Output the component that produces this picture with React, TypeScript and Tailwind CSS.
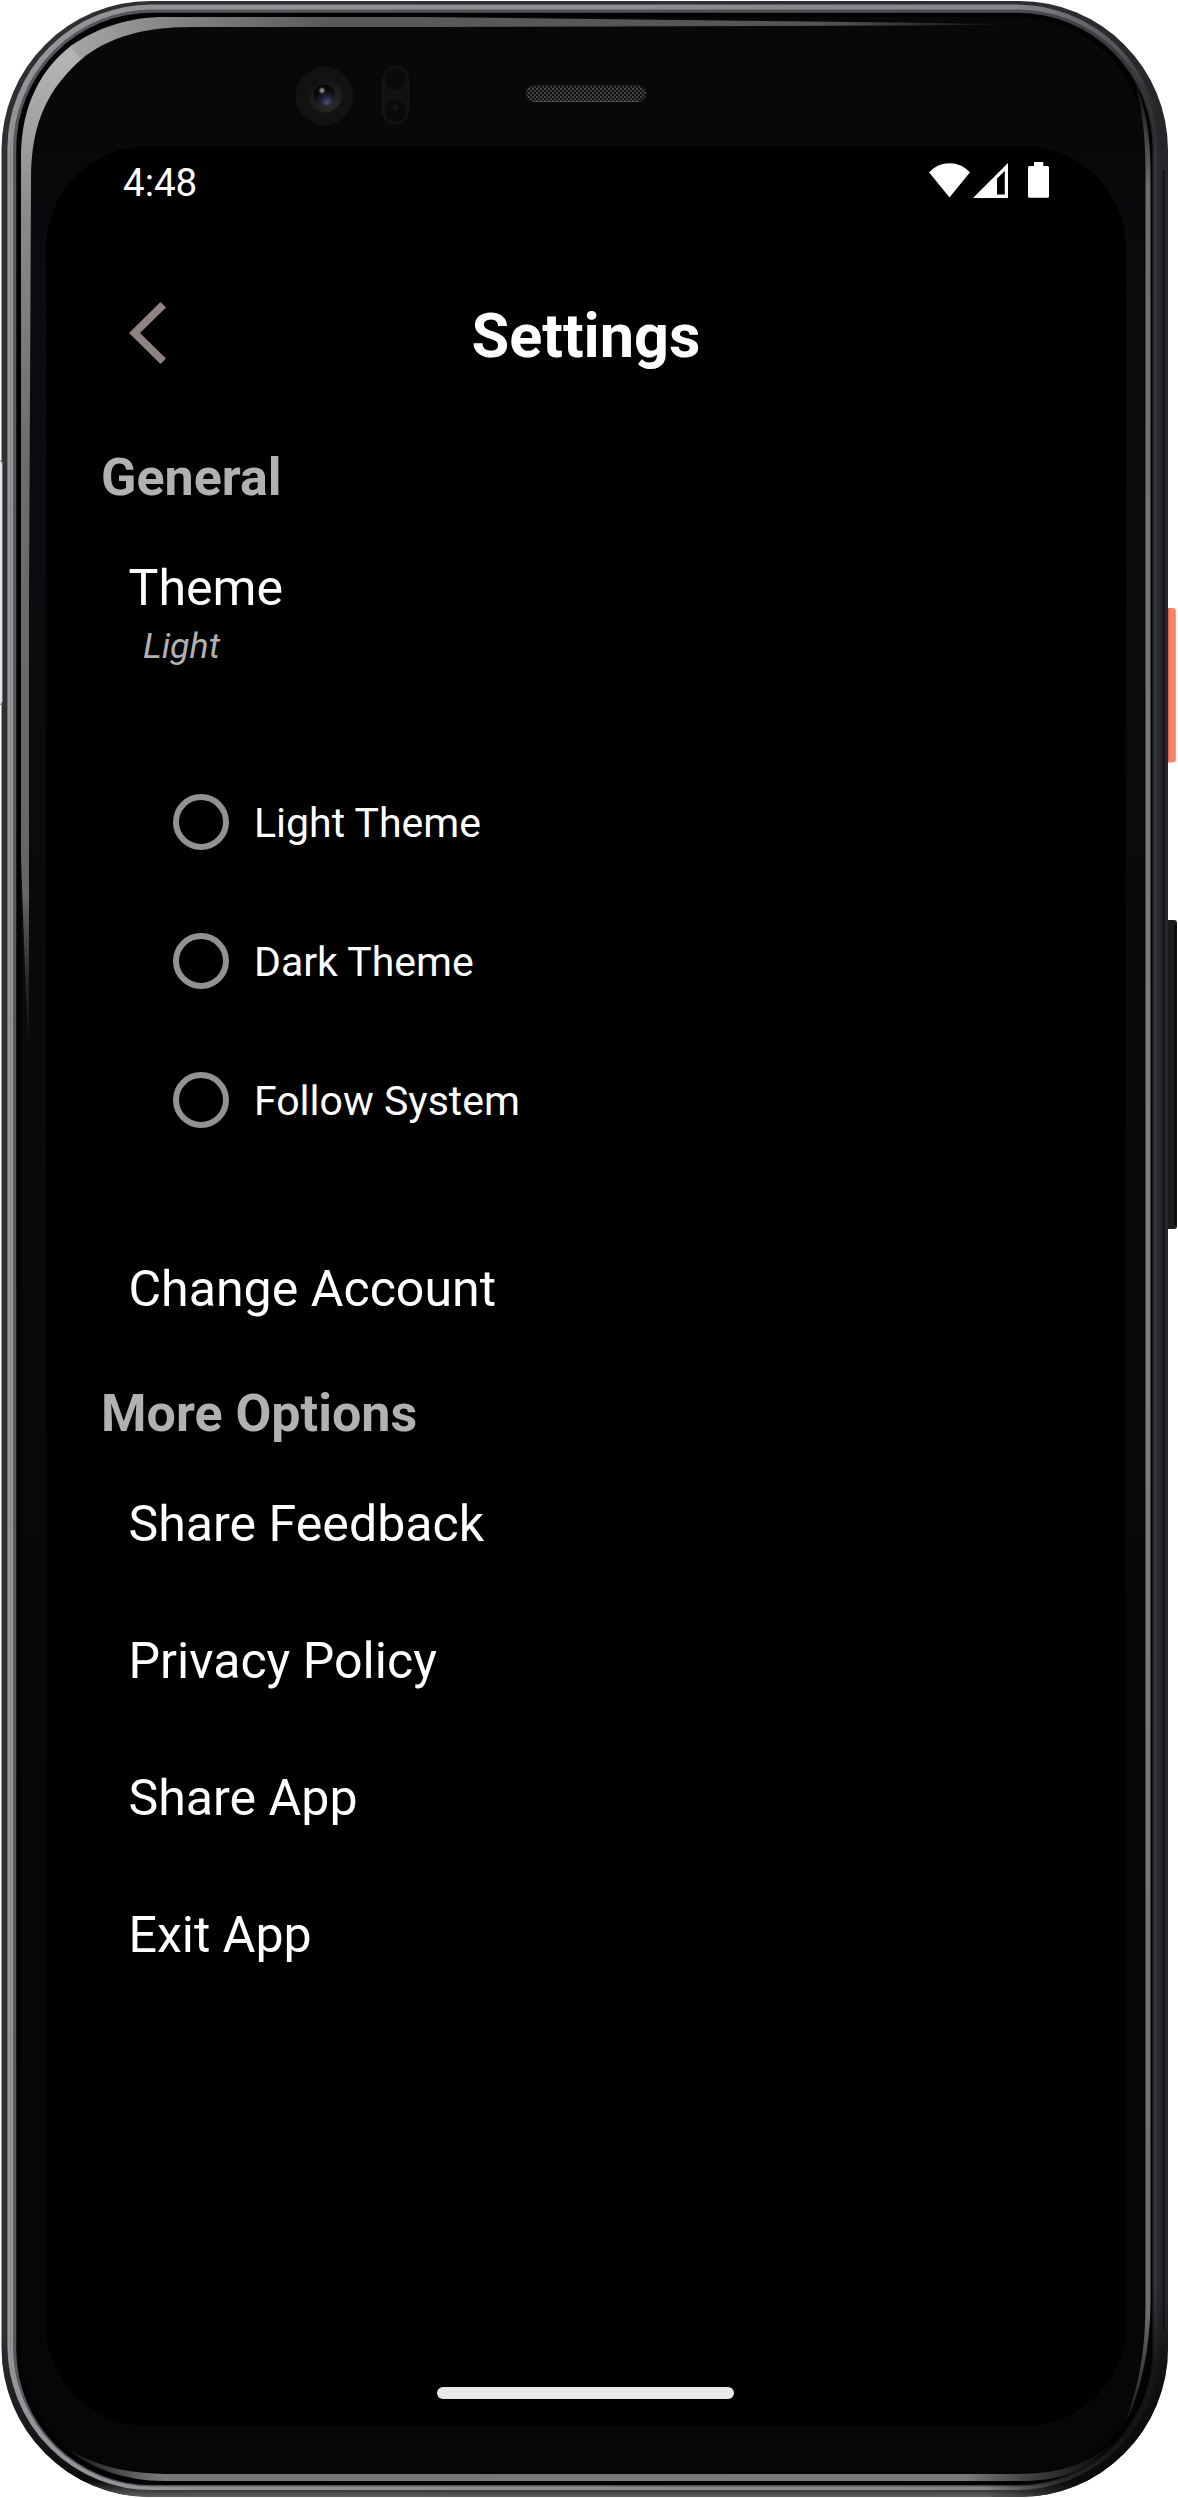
import React from "react";

function PhoneFrame() {
  return (
    <svg
      className="absolute inset-0 h-full w-full"
      viewBox="0 0 1178 2498"
      fill="none"
      aria-hidden="true"
    >
      <defs>
        <linearGradient id="shell" x1="0" y1="0" x2="1178" y2="0" gradientUnits="userSpaceOnUse">
          <stop offset="0" stopColor="#2f3131" />
          <stop offset="0.9" stopColor="#2c2d2f" />
          <stop offset="1" stopColor="#232527" />
        </linearGradient>
        <linearGradient id="bottomShade" x1="0" y1="2330" x2="0" y2="2498" gradientUnits="userSpaceOnUse">
          <stop offset="0" stopColor="#0a0a0b" stopOpacity="0" />
          <stop offset="0.9" stopColor="#0a0a0b" />
          <stop offset="1" stopColor="#666668" />
        </linearGradient>
        <linearGradient id="silver" x1="0" y1="0" x2="1178" y2="0" gradientUnits="userSpaceOnUse">
          <stop offset="0" stopColor="#94969b" />
          <stop offset="0.86" stopColor="#85868b" />
          <stop offset="0.95" stopColor="#55565b" />
          <stop offset="0.98" stopColor="#26282b" />
        </linearGradient>
        <linearGradient id="silverDim" x1="0" y1="0" x2="1178" y2="0" gradientUnits="userSpaceOnUse">
          <stop offset="0" stopColor="#56585c" />
          <stop offset="0.87" stopColor="#4c4d51" />
          <stop offset="1" stopColor="#2b2d31" />
        </linearGradient>
        <radialGradient id="cornerShade" cx="1125" cy="2440" r="150" gradientUnits="userSpaceOnUse">
          <stop offset="0" stopColor="#0b0b0c" stopOpacity="0.85" />
          <stop offset="0.5" stopColor="#0b0b0c" stopOpacity="0.7" />
          <stop offset="1" stopColor="#0b0b0c" stopOpacity="0" />
        </radialGradient>
        <linearGradient id="glareTop" x1="30" y1="0" x2="1020" y2="0" gradientUnits="userSpaceOnUse">
          <stop offset="0" stopColor="#b4b4b4" />
          <stop offset="0.12" stopColor="#8b8b8b" />
          <stop offset="0.3" stopColor="#5a5a5a" />
          <stop offset="0.8" stopColor="#555555" />
          <stop offset="1" stopColor="#555555" stopOpacity="0" />
        </linearGradient>
        <linearGradient id="glareLeft" x1="0" y1="60" x2="0" y2="1045" gradientUnits="userSpaceOnUse">
          <stop offset="0" stopColor="#b4b4b4" />
          <stop offset="0.15" stopColor="#8b8b8b" />
          <stop offset="0.4" stopColor="#6c6c6c" />
          <stop offset="0.85" stopColor="#666666" />
          <stop offset="1" stopColor="#444444" stopOpacity="0" />
        </linearGradient>
        <linearGradient id="glareRight" x1="0" y1="70" x2="0" y2="2430" gradientUnits="userSpaceOnUse">
          <stop offset="0" stopColor="#777777" stopOpacity="0" />
          <stop offset="0.05" stopColor="#6e6e6e" />
          <stop offset="0.5" stopColor="#808080" />
          <stop offset="0.95" stopColor="#6e6e6e" />
          <stop offset="1" stopColor="#444444" stopOpacity="0.4" />
        </linearGradient>
        <linearGradient id="glareBottom" x1="60" y1="0" x2="1125" y2="0" gradientUnits="userSpaceOnUse">
          <stop offset="0" stopColor="#777777" stopOpacity="0" />
          <stop offset="0.09" stopColor="#777777" />
          <stop offset="0.85" stopColor="#7a7a7a" />
          <stop offset="1" stopColor="#555555" stopOpacity="0" />
        </linearGradient>
        <linearGradient id="bezel" x1="0" y1="27" x2="0" y2="2474" gradientUnits="userSpaceOnUse">
          <stop offset="0" stopColor="#080809" />
          <stop offset="0.04" stopColor="#08080a" />
          <stop offset="0.12" stopColor="#0c0b10" />
          <stop offset="0.4" stopColor="#0b090a" />
          <stop offset="1" stopColor="#070508" />
        </linearGradient>
        <linearGradient id="orange" x1="1167" y1="0" x2="1176" y2="0" gradientUnits="userSpaceOnUse">
          <stop offset="0" stopColor="#c94f35" />
          <stop offset="0.3" stopColor="#fb7c5f" />
          <stop offset="0.7" stopColor="#fa8a6e" />
          <stop offset="1" stopColor="#ff6643" />
        </linearGradient>
        <radialGradient id="ring" cx="0.65" cy="0.75" r="0.75">
          <stop offset="0" stopColor="#2d2d2d" />
          <stop offset="1" stopColor="#101010" />
        </radialGradient>
        <radialGradient id="lens" cx="0.62" cy="0.85" r="0.6">
          <stop offset="0" stopColor="#46507a" />
          <stop offset="0.5" stopColor="#1e2135" />
          <stop offset="1" stopColor="#07070b" />
        </radialGradient>
        <radialGradient id="glint">
          <stop offset="0" stopColor="#a0a0a0" />
          <stop offset="0.5" stopColor="#666666" />
          <stop offset="1" stopColor="#222222" stopOpacity="0" />
        </radialGradient>
        <pattern id="mesh" width="4" height="4" patternUnits="userSpaceOnUse">
          <rect width="4" height="4" fill="#101010" />
          <rect x="0" y="0" width="2" height="2" fill="#474747" />
          <rect x="2" y="2" width="2" height="2" fill="#3a3a3a" />
        </pattern>
      </defs>

      {/* side buttons */}
      <rect x="1160" y="608" width="15.7" height="154.5" rx="3" fill="url(#orange)" />
      <rect x="1160" y="920" width="17" height="309" rx="3" fill="#1c1c1b" />
      <path d="M1175.5 924V1225" stroke="#080808" strokeWidth="2" />

      {/* metal shell */}
      <rect x="1.5" y="1" width="1166.5" height="2496" rx="149" fill="url(#shell)" />
      <rect x="1.5" y="1" width="1166.5" height="2496" rx="149" fill="url(#bottomShade)" />
      <path d="M1163.5 170V2330" stroke="#0c0d0e" strokeWidth="1.5" />

      {/* polished rim */}
      <rect x="9" y="6" width="1150" height="2482.5" rx="143" stroke="url(#silver)" strokeWidth="3.2" />
      <rect x="12" y="8.5" width="1145" height="2478.5" rx="140" stroke="url(#silver)" strokeWidth="3" />
      <rect x="14.5" y="11" width="1141" height="2474" rx="138" stroke="url(#silverDim)" strokeWidth="3" />
      <rect x="1.5" y="1" width="1166.5" height="2496" rx="149" fill="url(#cornerShade)" />
      <rect x="16.5" y="13" width="1136" height="2472" rx="135" fill="#020203" />

      {/* glass */}
      <rect x="21" y="17" width="1125" height="2463" rx="131" fill="url(#bezel)" />
      <path
        d="M21 857V158C21 104 42 68 72 45L84 57C48 88 31 122 31 180L29 600V1045H27.5Z"
        fill="url(#glareLeft)"
      />
      <path
        d="M70 46.5C98 27 130 17 165 17H420L900 22.5L1015 24.5L900 25.5L420 27H190C143 27 107 38 81 59.5Z"
        fill="url(#glareTop)"
      />
      <path
        d="M1134 78C1145 105 1150.5 135 1150.5 170V2300C1150.5 2350 1140 2392 1126 2422C1140 2380 1145.5 2350 1145.5 2300V170C1145.5 135 1142 108 1134 78Z"
        fill="url(#glareRight)"
      />
      <path
        d="M65 2447C98 2468 130 2474 175 2474H1020C1060 2474 1090 2463 1112 2443C1088 2472 1060 2481 1020 2481H165C125 2481 90 2468 65 2447Z"
        fill="url(#glareBottom)"
      />

      {/* rim cut-out on the left edge */}
      <rect x="-8" y="460" width="10.5" height="245" rx="4" fill="#e4e6e6" stroke="#6d7070" />

      {/* front camera */}
      <circle cx="324.5" cy="96" r="29" fill="#121212" />
      <circle cx="324.5" cy="95" r="17.5" fill="url(#ring)" />
      <circle cx="324.5" cy="95" r="10.5" fill="url(#lens)" />
      <circle cx="322" cy="90.5" r="4" fill="url(#glint)" />

      {/* proximity sensors */}
      <rect x="382.5" y="66.5" width="26" height="58" rx="13" fill="#111112" stroke="#161617" />
      <circle cx="395.5" cy="79" r="10.5" fill="#0a0a0b" />
      <circle cx="395.5" cy="111" r="10.5" fill="#09090a" />
      <circle cx="395.5" cy="107.5" r="3" fill="#151516" />

      {/* earpiece */}
      <rect x="526" y="85.5" width="120" height="16" rx="7.5" fill="url(#mesh)" stroke="#1c1c1c" />
      <path d="M533 101.5H639" stroke="#4a4a4a" />
      <path d="M140 145.5H1030" stroke="#0f0f10" />
    </svg>
  );
}

function StatusBar() {
  return (
    <div className="flex h-[74px] items-center justify-between pr-[77px] pl-[77px]">
      <span className="text-[38.5px] leading-[46px]">4:48</span>
      <svg className="mb-[6px] h-[36px] w-[120px]" viewBox="929 162 120 36" fill="#fff" aria-hidden="true">
        <path d="M929 172.3Q937.5 163.3 949.5 163.3T970 172.3L949.5 197.5Z" />
        <path
          fillRule="evenodd"
          d="M973 198L1008 163V198ZM997 178.5V194.5H1004.8V171Z"
        />
        <path d="M1034 162H1043.3V166H1047.5Q1049 166 1049 167.5V196.3Q1049 197.8 1047.5 197.8H1029.5Q1028 197.8 1028 196.3V167.5Q1028 166 1029.5 166H1034Z" />
      </svg>
    </div>
  );
}

function SectionTitle({ children }: { children: React.ReactNode }) {
  return <h2 className="pl-[55px] text-[52px] leading-[60px] font-bold text-[#b1b1b1]">{children}</h2>;
}

function Item({ children }: { children: React.ReactNode }) {
  return <div className="pl-[82.5px] text-[50.1px] leading-[60px]">{children}</div>;
}

function RadioRow({ label }: { label: string }) {
  return (
    <label className="flex h-[139px] items-center gap-[25px]">
      <span className="h-[56px] w-[56px] rounded-full border-[6px] border-[#929292]" />
      <span className="pt-[2px] text-[41px] leading-[50px]">{label}</span>
    </label>
  );
}

export default function App() {
  return (
    <div className="relative h-[2498px] w-[1178px] overflow-hidden bg-white pt-[146px] pl-[46px] font-['Roboto',sans-serif]">
      <PhoneFrame />
      <main className="relative flex h-[2280px] w-[1080px] flex-col rounded-[102px] bg-black text-white">
        <StatusBar />

        <header className="mt-[76px] grid h-[80px] grid-cols-[1fr_auto_1fr] items-center">
          <button className="mb-[6px] ml-[83px] w-[37px]" aria-label="Back">
            <svg className="block h-[62px] w-[37px]" viewBox="0 0 37 62" fill="#8f8483" aria-hidden="true">
              <path d="M0 31L31.5 0L37 5.5L11 31L37 56.5L31.5 62Z" />
            </svg>
          </button>
          <h1 className="text-[61.2px] leading-[80px] font-bold">Settings</h1>
        </header>

        <section className="mt-[72px]">
          <SectionTitle>General</SectionTitle>
          <div className="mt-[50px]">
            <Item>Theme</Item>
            <p className="mt-[6px] pl-[97px] text-[35.75px] leading-[44px] text-[#b1b1b1] italic">Light</p>
          </div>
          <div className="mt-[84px] pl-[127px]">
            <RadioRow label="Light Theme" />
            <RadioRow label="Dark Theme" />
            <RadioRow label="Follow System" />
          </div>
          <div className="mt-[90px]">
            <Item>Change Account</Item>
          </div>
        </section>

        <section className="mt-[65px]">
          <SectionTitle>More Options</SectionTitle>
          <div className="mt-[50px] flex flex-col gap-[77px]">
            <Item>Share Feedback</Item>
            <Item>Privacy Policy</Item>
            <Item>Share App</Item>
            <Item>Exit App</Item>
          </div>
        </section>

        <div className="mt-auto mb-[27px] ml-[391px] h-[12px] w-[297px] rounded-[6px] bg-[#e9e9e9]" />
      </main>
    </div>
  );
}
